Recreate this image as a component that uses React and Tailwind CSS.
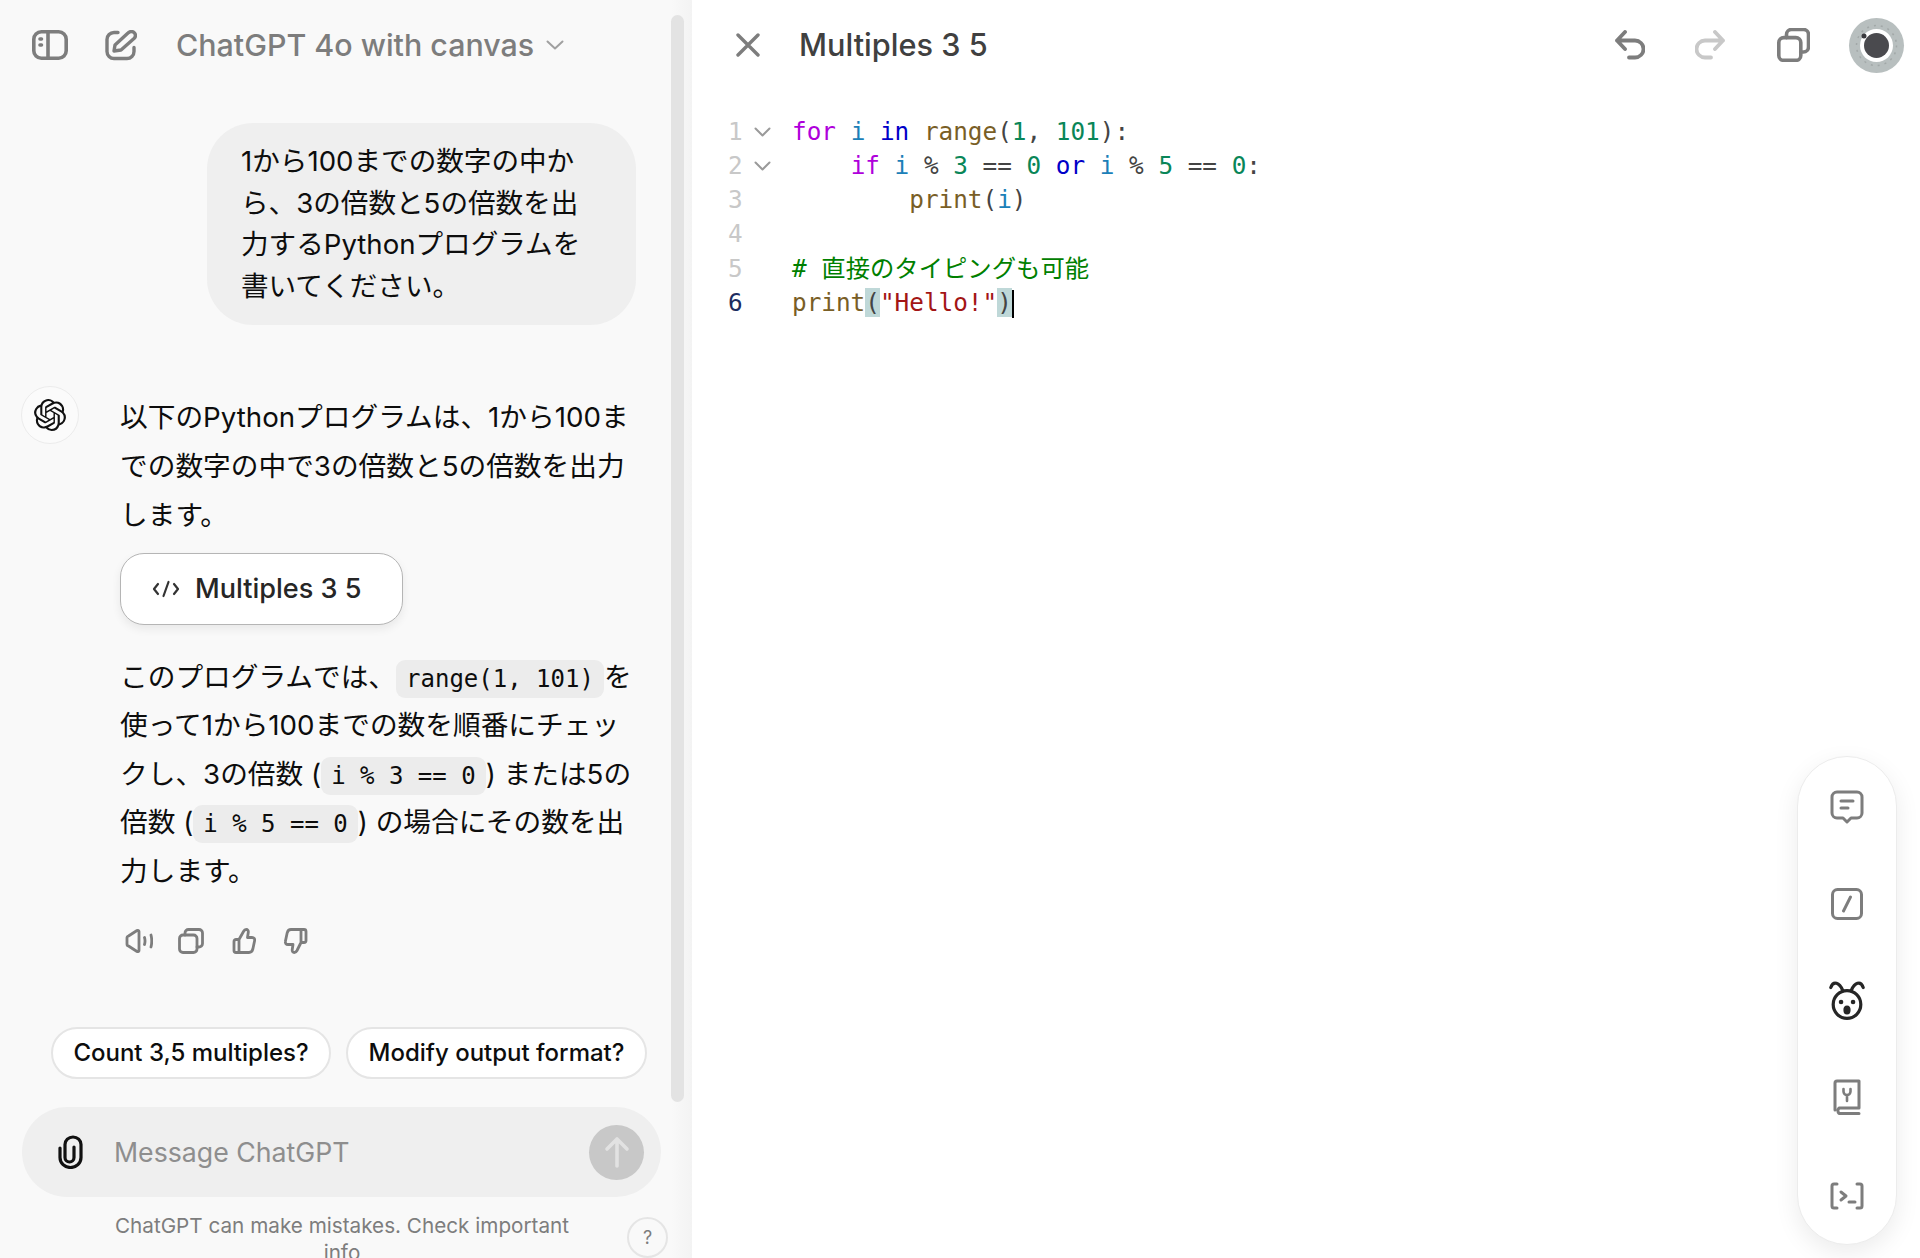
import React from 'react';
import { SiOpenai } from 'react-icons/si';

const Stroke = ({ w, h, vw, vh, color = '#7d7d7d', sw = 3, children }) => (
  <svg
    width={w}
    height={h}
    viewBox={`0 0 ${vw || w} ${vh || h}`}
    fill="none"
    stroke={color}
    strokeWidth={sw}
    strokeLinecap="round"
    strokeLinejoin="round"
    className="shrink-0"
  >
    {children}
  </svg>
);

const Code = ({ children }) => (
  <code className="rounded-[9px] bg-[#ececec] px-[10px] py-[5px] font-['DejaVu_Sans_Mono','Noto_Sans_CJK_JP',monospace] text-[24px] leading-none">
    {children}
  </code>
);

const ChatPanel = () => (
  <div className="flex w-[692px] shrink-0 bg-[#f9f9f9]">
    <div className="w-[671px] shrink-0">
      {/* Top bar */}
      <div className="flex h-[90px] items-center pl-[32px]">
        <Stroke w={36} h={30} sw={3.600}>
          <rect x="1.800" y="1.800" width="32.400" height="26.400" rx="7.500" />
          <path d="M16 2v26" />
          <path d="M8 9h1.500M8 15h1.500" />
        </Stroke>
        <div className="ml-[37px]">
          <Stroke w={32} h={31} sw={3.400}>
            <path d="M13 2.500H9a7 7 0 0 0-7 7v12a7 7 0 0 0 7 7h13a7 7 0 0 0 7-7v-4" />
            <path d="M9 21l1-6L23 3c2-2 5-2 6.500 0s1 4-.5 5.500L16 20z" />
          </Stroke>
        </div>
        <div className="mt-[1px] ml-[39px] text-[30.400px] font-medium text-[#7d7d7d]">ChatGPT 4o with canvas</div>
        <div className="ml-[12px]">
          <Stroke w={18} h={10} color="#a0a0a0" sw={2}>
            <path d="M1.500 1.500L9 8.500l7.500-7" />
          </Stroke>
        </div>
      </div>

      {/* User bubble */}
      <div className="mt-[33px] ml-[207px] h-[202px] w-[429px] rounded-[46px] bg-[#efefef] pt-[18px] pl-[34px] text-[27.600px] leading-[41.700px] whitespace-nowrap text-[#0d0d0d]">
        1から100までの数字の中か
        <br />
        ら、3の倍数と5の倍数を出
        <br />
        力するPythonプログラムを
        <br />
        書いてください。
      </div>

      {/* Assistant message */}
      <div className="mt-[61px] flex pl-[21px]">
        <div className="flex h-[58px] w-[58px] shrink-0 items-center justify-center rounded-full border border-[#ececec] bg-[#fbfbfb] text-[#111]">
          <SiOpenai size={32} />
        </div>
        <div className="ml-[41px] text-[27.700px] whitespace-nowrap text-[#0d0d0d]">
          <p className="mt-[6.500px] leading-[49px]">
            以下のPythonプログラムは、1から100ま
            <br />
            での数字の中で3の倍数と5の倍数を出力
            <br />
            します。
          </p>
          <div className="mt-[13.500px] flex h-[72px] w-[283px] items-center rounded-[24px] border border-[#b5b5b5] bg-white pl-[31px] shadow-[0_4px_10px_rgba(0,0,0,0.07)]">
            <Stroke w={28} h={20} sw={2.200} color="#333">
              <path d="M6 5l-4 5 4 5M22 5l4 5-4 5M16.500 3l-5 14" />
            </Stroke>
            <span className="ml-[15px] text-[27.100px] font-medium text-[#262626]">Multiples 3 5</span>
          </div>
          <p className="mt-[27.500px] leading-[48.500px]">
            このプログラムでは、<Code>range(1, 101)</Code>を
            <br />
            使って1から100までの数を順番にチェッ
            <br />
            クし、3の倍数 (<Code>i % 3 == 0</Code>) または5の
            <br />
            倍数 (<Code>i % 5 == 0</Code>) の場合にその数を出
            <br />
            力します。
          </p>
          <div className="mt-[33px] flex h-[26px] items-center pl-[5px]">
            <Stroke w={28} h={26} sw={2.800}>
              <path d="M2 10a2 2 0 0 1 1.500-2L12 2.500c1-.5 2 0 2 1v19c0 1-1 1.500-2 1L3.500 18A2 2 0 0 1 2 16z" />
              <path d="M19.500 9.500c.7 2.300.7 4.700 0 7M26 7c1 4 1 8 0 12" />
            </Stroke>
            <div className="ml-[25px]">
              <Stroke w={26} h={26} sw={2.800}>
                <rect x="1.500" y="7" width="17.500" height="17.500" rx="3.500" />
                <path d="M7 7V5a3.500 3.500 0 0 1 3.500-3.500H21A3.500 3.500 0 0 1 24.500 5v10.500A3.500 3.500 0 0 1 21 19h-2" />
              </Stroke>
            </div>
            <div className="ml-[28px]">
              <Stroke w={24} h={26} sw={2.800}>
                <path d="M2 13.500a2 2 0 0 1 2-2h3v13H4a2 2 0 0 1-2-2zM7 11.500l4.500-8c.7-1.300 1.500-2 2.700-2 1.500 0 2.300 1.200 2.100 2.700L15.500 9.500H20c2 0 3 1.500 2.600 3.200l-1.800 8.500c-.5 2-1.600 3.300-3.800 3.300H7" />
              </Stroke>
            </div>
            <div className="ml-[27px]">
              <Stroke w={25} h={26} sw={2.800}>
                <path d="M23 12.500a2 2 0 0 1-2 2h-3v-13h3a2 2 0 0 1 2 2zM18 14.500l-4 8c-.7 1.300-1.500 2-2.700 2-1.500 0-2.300-1.200-2.100-2.700L10 16.500H5c-2 0-3-1.500-2.600-3.200L4.200 4.800C4.700 2.800 5.800 1.500 8 1.500h10" />
              </Stroke>
            </div>
          </div>
        </div>
      </div>

      {/* Follow up chips */}
      <div className="mt-[73px] flex gap-[15px] pl-[51px]">
        <button className="h-[52px] w-[280px] rounded-full border-2 border-[#e5e5e5] bg-white text-[24px] font-medium text-[#0d0d0d]">
          Count 3,5 multiples?
        </button>
        <button className="h-[52px] w-[301px] rounded-full border-2 border-[#e5e5e5] bg-white text-[24px] font-medium text-[#0d0d0d]">
          Modify output format?
        </button>
      </div>

      {/* Composer */}
      <div className="mt-[28px] ml-[22px] flex h-[90px] w-[639px] items-center rounded-full bg-[#efefef] pr-[17px] pl-[36px]">
        <Stroke w={25} h={34} color="#111" sw={3.200}>
          <path d="M2 13v9.500a10.500 10 0 0 0 21 0V9.500a8 7.500 0 0 0-16 0v13a4.500 4.500 0 0 0 9 0V12" />
        </Stroke>
        <div className="ml-[31px] flex-1 text-[26.700px] text-[#8e8e8e]">Message ChatGPT</div>
        <div className="flex h-[55px] w-[55px] items-center justify-center rounded-full bg-[#c8c8c8]">
          <Stroke w={26} h={32} color="#e2e2e2" sw={3.600}>
            <path d="M13 30V3M3 13L13 3l10 10" />
          </Stroke>
        </div>
      </div>

      {/* Disclaimer */}
      <div className="relative mt-[14.500px] pl-[13px] text-center text-[20.700px] leading-[27px] text-[#7d7d7d]">
        <div className="mx-auto w-[470px]">ChatGPT can make mistakes. Check important info</div>
        <div className="absolute top-[5.500px] left-[627px] flex h-[41px] w-[41px] items-center justify-center rounded-full border-2 border-[#e5e5e5] text-[18px]">
          ?
        </div>
      </div>
    </div>

    {/* Scrollbar */}
    <div className="h-full w-[21px] shrink-0 bg-linear-to-r from-[#f9f9f9] to-[#f3f3f3] pt-[15px]">
      <div className="h-[1087px] w-[13px] rounded-full bg-[#e3e3e3]" />
    </div>
  </div>
);

const lines = [
  [
    ['for', 'text-[#af00db]'],
    [' '],
    ['i', 'text-[#1b80b8]'],
    [' '],
    ['in', 'text-[#0000c8]'],
    [' '],
    ['range', 'text-[#795e26]'],
    ['(', 'text-[#444]'],
    ['1', 'text-[#098658]'],
    [', ', 'text-[#444]'],
    ['101', 'text-[#098658]'],
    ['):', 'text-[#444]'],
  ],
  [
    ['    '],
    ['if', 'text-[#af00db]'],
    [' '],
    ['i', 'text-[#1b80b8]'],
    [' % ', 'text-[#444]'],
    ['3', 'text-[#098658]'],
    [' == ', 'text-[#444]'],
    ['0', 'text-[#098658]'],
    [' '],
    ['or', 'text-[#0000c8]'],
    [' '],
    ['i', 'text-[#1b80b8]'],
    [' % ', 'text-[#444]'],
    ['5', 'text-[#098658]'],
    [' == ', 'text-[#444]'],
    ['0', 'text-[#098658]'],
    [':', 'text-[#444]'],
  ],
  [
    ['        '],
    ['print', 'text-[#795e26]'],
    ['(', 'text-[#444]'],
    ['i', 'text-[#1b80b8]'],
    [')', 'text-[#444]'],
  ],
  [],
  [['# 直接のタイピングも可能', 'text-[#008000]']],
  [
    ['print', 'text-[#795e26]'],
    ['(', 'text-[#444] bg-[#bfd8d8]'],
    ['"Hello!"', 'text-[#a31515]'],
    [')', 'text-[#444] bg-[#bfd8d8]'],
  ],
];

const CodeEditor = () => (
  <div className="mt-[24.500px] font-['DejaVu_Sans_Mono','Noto_Sans_CJK_JP',monospace] text-[24.350px]">
    {lines.map((tokens, i) => (
      <div key={i} className="flex h-[34.250px] items-center pl-[36px] leading-[34.250px] whitespace-pre">
        <span className={`w-[26px] ${i === 5 ? 'text-[#1d2c60]' : 'text-[#c8c8c8]'}`}>{i + 1}</span>
        <span className="flex w-[38px] items-center">
          {i < 2 && (
            <Stroke w={17} h={10} color="#9a9a9a" sw={2}>
              <path d="M1.500 1.500l7 7 7-7" />
            </Stroke>
          )}
        </span>
        <span>
          {tokens.map(([text, cls], j) => (
            <span key={j} className={cls}>
              {text}
            </span>
          ))}
          {i === 5 && <span className="inline-block h-[28px] w-[2px] bg-black align-middle" />}
        </span>
      </div>
    ))}
  </div>
);

const Toolbar = () => (
  <div className="absolute top-[756px] right-[23px] flex h-[489px] w-[100px] flex-col items-center rounded-full border border-[#ececec] bg-white pt-[34px] shadow-[0_8px_24px_rgba(0,0,0,0.08)]">
    <div className="flex h-[32px] items-center">
      <Stroke w={34} h={34} sw={3}>
        <path d="M7 2h20a5 5 0 0 1 5 5v16a5 5 0 0 1-5 5h-6l-4 4-4-4H7a5 5 0 0 1-5-5V7a5 5 0 0 1 5-5z" />
        <path d="M11 11h12M11 18h7" />
      </Stroke>
    </div>
    <div className="mt-[65px] flex h-[32px] items-center">
      <Stroke w={32} h={32} sw={3}>
        <rect x="1.500" y="1.500" width="29" height="29" rx="5" />
        <path d="M19.500 9l-7 14" />
      </Stroke>
    </div>
    <div className="mt-[60px] flex h-[40px] items-center">
      <Stroke w={36} h={40} color="#262626" sw={3.200}>
        <circle cx="18" cy="24.500" r="13.800" />
        <path d="M13.500 10C10.500 3 4.500 0 1.800 7.500M22.500 10c3-7 9-10 11.700-2.500" />
        <path d="M12 22h.1M24 22h.1" strokeWidth="4.500" />
        <ellipse cx="18" cy="30" rx="2" ry="3" fill="#262626" />
      </Stroke>
    </div>
    <div className="mt-[59px] flex h-[36px] items-center">
      <Stroke w={28} h={36} sw={3}>
        <path d="M2 31V4a2 2 0 0 1 2-2h22v27H6a4 4 0 0 0 0 5.500h20" />
        <path d="M10.500 10v2.500a3.500 3.500 0 0 0 7 0V10M14 16v6" strokeWidth="2.600" />
      </Stroke>
    </div>
    <div className="mt-[67px] flex h-[28px] items-center">
      <Stroke w={34} h={28} sw={3}>
        <path d="M7 2H4a2 2 0 0 0-2 2v20a2 2 0 0 0 2 2h3M27 2h3a2 2 0 0 1 2 2v20a2 2 0 0 1-2 2h-3" />
        <path d="M11 10l5 4-5 4M19 20h6" />
      </Stroke>
    </div>
  </div>
);

const CanvasPanel = () => (
  <div className="relative flex-1 bg-white">
    {/* Canvas header */}
    <div className="flex h-[90px] items-center pr-[16px] pl-[44px]">
      <Stroke w={24} h={24} sw={3.400}>
        <path d="M2 2l20 20M22 2L2 22" />
      </Stroke>
      <div className="ml-[39px] flex-1 text-[30.700px] font-medium text-[#404040]">Multiples 3 5</div>
      <Stroke w={30} h={30} sw={3.800}>
        <path d="M10 2L2 10.500l8 8.500M2 10.500h18a8 8 0 0 1 0 17h-6" />
      </Stroke>
      <div className="ml-[50px]">
        <Stroke w={30} h={30} color="#c8c8c8" sw={3.800}>
          <path d="M20 2l8 8.500-8 8.500M28 10.500H10a8 8 0 0 0 0 17h6" />
        </Stroke>
      </div>
      <div className="ml-[52px]">
        <Stroke w={33} h={34} sw={3.600}>
          <rect x="1.800" y="9.600" width="22" height="22.800" rx="5" />
          <path d="M9.500 9.600V6.500a5 5 0 0 1 5-5h12a5 5 0 0 1 5 5v12.500a5 5 0 0 1-5 5h-2.800" />
        </Stroke>
      </div>
      <div className="ml-[39px] flex h-[55px] w-[55px] items-center justify-center rounded-full bg-[#b8bfbf]">
        <svg width="55" height="55" viewBox="0 0 55 55" className="shrink-0">
          <circle cx="27.500" cy="27.500" r="20" fill="none" stroke="#a2a8a8" strokeWidth="1.500" strokeDasharray="2 5" />
          <circle cx="27.500" cy="27.500" r="16.500" fill="white" />
          <circle cx="27.500" cy="27.500" r="12.500" fill="#4a4a4e" />
          <circle cx="15" cy="18" r="2.500" fill="#3a3a3e" />
        </svg>
      </div>
    </div>
    <CodeEditor />
    <Toolbar />
  </div>
);

export default function App() {
  return (
    <div className="flex h-[1258px] w-[1920px] overflow-hidden bg-white font-[Inter,'Noto_Sans_CJK_JP',sans-serif]">
      <ChatPanel />
      <CanvasPanel />
    </div>
  );
}
